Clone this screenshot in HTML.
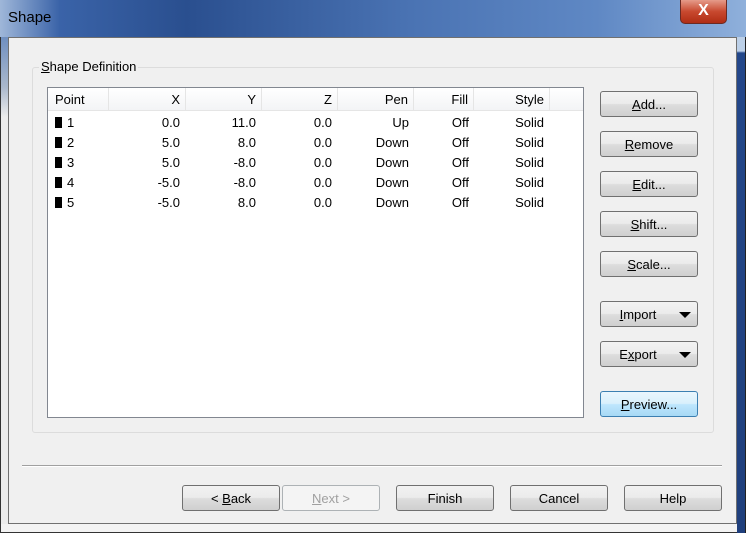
<!DOCTYPE html>
<html><head><meta charset="utf-8"><style>
*{box-sizing:border-box;margin:0;padding:0}
body{width:746px;height:533px;overflow:hidden;background:#ececec;font-family:"Liberation Sans",Arial,sans-serif;font-size:13px;color:#000;position:relative}
.title{position:absolute;left:0;top:0;width:746px;height:37px;background:linear-gradient(90deg,#9fb7d9 0%,#3a63a8 8%,#2a4f8f 25%,#4a73b3 55%,#5f88c4 80%,#8fb0db 100%)}
.title span{position:absolute;left:8px;top:9px;font-size:15px;color:#000}
.close{position:absolute;left:680px;top:0;width:47px;height:24px;border:1px solid #6b2a22;border-top:none;border-radius:0 0 5px 5px;background:linear-gradient(#e59b8a,#c8492f 50%,#b02d14);color:#fff;font-weight:bold;text-align:center;font-size:16px;line-height:22px}
.frameL{position:absolute;left:0;top:37px;width:9px;height:496px;background:linear-gradient(#6f8fc0 0px,#aab8cc 50px,#ececec 80px);border-left:1px solid #333}
.frameR{position:absolute;left:736px;top:37px;width:10px;height:496px;background:linear-gradient(#bcd0e8 0px,#bcd0e8 14px,#23478a 16px,#1f3f7c 100%);border-right:1px solid #222}
.frameB{position:absolute;left:0;top:524px;width:737px;height:9px;background:#f3f3f3;border-bottom:1px solid #333;border-left:1px solid #333}
.client{position:absolute;left:8px;top:37px;width:729px;height:487px;background:#f0f0f0;border:1px solid #707070}
.group{position:absolute;left:32px;top:67px;width:682px;height:366px;border:1px solid #dcdcdc;border-radius:3px}
.glabel{position:absolute;left:39px;top:59px;background:#f0f0f0;padding:0 2px;font-size:13px}
.list{position:absolute;left:47px;top:87px;width:537px;height:331px;background:#fff;border:1px solid #828790}
.hdr{position:absolute;left:0;top:0;height:23px;width:535px;background:linear-gradient(#fff,#f3f4f6);border-bottom:1px solid #e5e5e5}
.hc{position:absolute;top:0;height:23px;line-height:23px;border-right:1px solid #e5e5e5;padding:0 5px;text-align:right}
.row{position:absolute;left:0;height:20px;width:535px;line-height:20px}
.c{position:absolute;text-align:right}
.sq{display:inline-block;width:7px;height:11px;background:#000;vertical-align:-1px;margin-right:5px}
.btn{position:absolute;width:98px;height:26px;border:1px solid #707070;border-radius:3px;background:linear-gradient(#f2f2f2 0%,#ebebeb 48%,#dddddd 52%,#cfcfcf 100%);text-align:center;line-height:25px;font-size:13px}
.dis{color:#a0a0a0;border-color:#adb2b5;background:#f4f4f4}
.arr{position:absolute;right:6px;top:10px;width:0;height:0;border-left:6px solid transparent;border-right:6px solid transparent;border-top:6px solid #000}
.def{border-color:#3c7fb1;background:linear-gradient(#eaf6fd,#d9f0fc 48%,#bee6fd 52%,#a7d9f5)}
.sep{position:absolute;left:22px;top:465px;width:700px;height:2px;border-top:1px solid #a0a0a0;border-bottom:1px solid #fff}
</style></head><body>
<div class="title"><span>Shape</span></div>
<div class="close">X</div>
<div class="frameL"></div><div class="frameR"></div><div class="frameB"></div>
<div class="client"></div>
<div class="group"></div>
<div class="glabel"><u>S</u>hape Definition</div>
<div class="list">
 <div class="hdr">
  <div class="hc" style="left:0;width:61px;text-align:left;padding-left:7px">Point</div>
  <div class="hc" style="left:61px;width:77px">X</div>
  <div class="hc" style="left:138px;width:76px">Y</div>
  <div class="hc" style="left:214px;width:76px">Z</div>
  <div class="hc" style="left:290px;width:76px">Pen</div>
  <div class="hc" style="left:366px;width:60px">Fill</div>
  <div class="hc" style="left:426px;width:76px">Style</div>
 </div>
 <div class="row" style="top:25px"><span class="c" style="left:7px"><span class="sq"></span>1</span><span class="c" style="right:403px">0.0</span><span class="c" style="right:327px">11.0</span><span class="c" style="right:251px">0.0</span><span class="c" style="right:174px">Up</span><span class="c" style="right:114px">Off</span><span class="c" style="right:39px">Solid</span></div>
 <div class="row" style="top:45px"><span class="c" style="left:7px"><span class="sq"></span>2</span><span class="c" style="right:403px">5.0</span><span class="c" style="right:327px">8.0</span><span class="c" style="right:251px">0.0</span><span class="c" style="right:174px">Down</span><span class="c" style="right:114px">Off</span><span class="c" style="right:39px">Solid</span></div>
 <div class="row" style="top:65px"><span class="c" style="left:7px"><span class="sq"></span>3</span><span class="c" style="right:403px">5.0</span><span class="c" style="right:327px">-8.0</span><span class="c" style="right:251px">0.0</span><span class="c" style="right:174px">Down</span><span class="c" style="right:114px">Off</span><span class="c" style="right:39px">Solid</span></div>
 <div class="row" style="top:85px"><span class="c" style="left:7px"><span class="sq"></span>4</span><span class="c" style="right:403px">-5.0</span><span class="c" style="right:327px">-8.0</span><span class="c" style="right:251px">0.0</span><span class="c" style="right:174px">Down</span><span class="c" style="right:114px">Off</span><span class="c" style="right:39px">Solid</span></div>
 <div class="row" style="top:105px"><span class="c" style="left:7px"><span class="sq"></span>5</span><span class="c" style="right:403px">-5.0</span><span class="c" style="right:327px">8.0</span><span class="c" style="right:251px">0.0</span><span class="c" style="right:174px">Down</span><span class="c" style="right:114px">Off</span><span class="c" style="right:39px">Solid</span></div>
</div>
<div class="btn" style="left:600px;top:91px"><u>A</u>dd...</div>
<div class="btn" style="left:600px;top:131px"><u>R</u>emove</div>
<div class="btn" style="left:600px;top:171px"><u>E</u>dit...</div>
<div class="btn" style="left:600px;top:211px"><u>S</u>hift...</div>
<div class="btn" style="left:600px;top:251px"><u>S</u>cale...</div>
<div class="btn" style="left:600px;top:301px;padding-right:22px"><u>I</u>mport<span class="arr"></span></div>
<div class="btn" style="left:600px;top:341px;padding-right:22px">E<u>x</u>port<span class="arr"></span></div>
<div class="btn def" style="left:600px;top:391px"><u>P</u>review...</div>
<div class="sep"></div>
<div class="btn" style="left:182px;top:485px">&lt; <u>B</u>ack</div>
<div class="btn dis" style="left:282px;top:485px"><u>N</u>ext &gt;</div>
<div class="btn" style="left:396px;top:485px">Finish</div>
<div class="btn" style="left:510px;top:485px">Cancel</div>
<div class="btn" style="left:624px;top:485px">Help</div>
</body></html>
